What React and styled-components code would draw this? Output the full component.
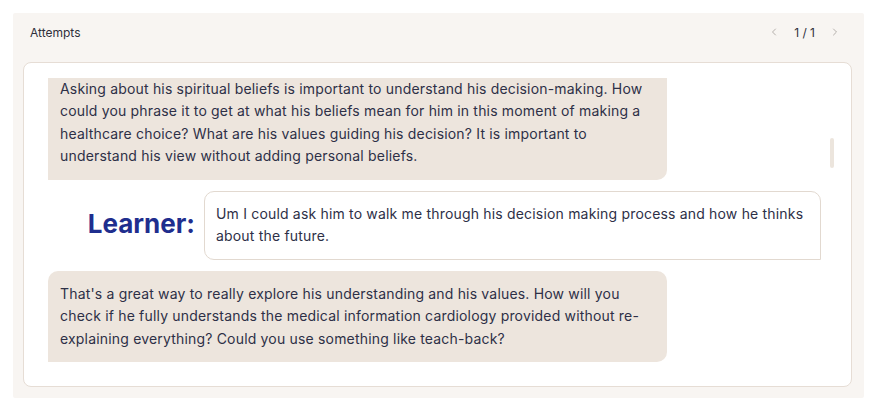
import styled, { createGlobalStyle } from 'styled-components';
import { ChevronLeft, ChevronRight } from 'lucide-react';

const GlobalStyle = createGlobalStyle`
  html, body {
    margin: 0;
    padding: 0;
    background: #ffffff;
  }
  body {
    font-family: Inter, "Noto Sans", sans-serif;
    color: #2e3047;
  }
`;

const Page = styled.div`
  padding: 13px 14px 12px 13px;
`;

const Panel = styled.section`
  background: #f8f5f2;
  border-radius: 2px;
  padding: 0 12px 11px 10px;
  height: 385px;
  box-sizing: border-box;
  display: flex;
  flex-direction: column;
`;

const Header = styled.div`
  height: 38px;
  margin-bottom: 11px;
  display: flex;
  align-items: center;
  justify-content: space-between;
  padding: 0 11px 0 7px;
`;

const HeaderTitle = styled.span`
  font-size: 12px;
  color: #2f2f3a;
`;

const Pager = styled.div`
  display: flex;
  align-items: center;
  gap: 14px;
  font-size: 12px;
  color: #2f2f3a;

  svg {
    color: #a29d98;
  }
`;

const Card = styled.div`
  position: relative;
  flex: 1;
  background: #ffffff;
  border: 1px solid #e6ddd5;
  border-radius: 8px;
  padding: 15px 0 15px;
  min-height: 0;
  display: flex;
`;

const Viewport = styled.div`
  flex: 1;
  overflow: hidden;
  display: flex;
  flex-direction: column;
  justify-content: flex-end;
  gap: 11px;
  padding: 0 30px 9px 24px;
`;

const Thumb = styled.div`
  position: absolute;
  top: 75px;
  right: 17px;
  width: 4px;
  height: 30px;
  border-radius: 2px;
  background: #ece5dd;
`;

const Bubble = styled.div`
  flex-shrink: 0;
  box-sizing: border-box;
  font-size: 14px;
  line-height: 22.5px;
  letter-spacing: 0.18px;
  background: ${(p) => (p.$learner ? '#ffffff' : '#ede5dd')};
  border: ${(p) => (p.$learner ? '1px solid #e2d9d0' : 'none')};
  border-radius: ${(p) => (p.$learner ? '10px 10px 0 10px' : '10px 10px 10px 0')};
  padding: ${(p) => (p.$learner ? '11px 10px 11px 11px' : '12px')};
  width: ${(p) => (p.$learner ? '617px' : '619px')};
`;

const LearnerRow = styled.div`
  flex-shrink: 0;
  display: flex;
  align-items: center;
  justify-content: flex-end;
  gap: 9px;
`;

const LearnerLabel = styled.span`
  font-size: 26px;
  font-weight: 700;
  color: #1f2e8e;
  padding-bottom: 4px;
`;

const messages = [
  {
    from: 'coach',
    text: 'Asking about his spiritual beliefs is important to understand his decision-making. How could you phrase it to get at what his beliefs mean for him in this moment of making a healthcare choice? What are his values guiding his decision? It is important to understand his view without adding personal beliefs.',
  },
  {
    from: 'learner',
    text: 'Um I could ask him to walk me through his decision making process and how he thinks about the future.',
  },
  {
    from: 'coach',
    text: "That's a great way to really explore his understanding and his values. How will you check if he fully understands the medical information cardiology provided without re-explaining everything? Could you use something like teach-back?",
  },
];

export default function App() {
  return (
    <>
      <GlobalStyle />
      <Page>
        <Panel>
          <Header>
            <HeaderTitle>Attempts</HeaderTitle>
            <Pager>
              <ChevronLeft size={12} strokeWidth={1.6} />
              <span>1 / 1</span>
              <ChevronRight size={12} strokeWidth={1.6} />
            </Pager>
          </Header>
          <Card>
            <Viewport>
              {messages.map((m, i) =>
                m.from === 'learner' ? (
                  <LearnerRow key={i}>
                    <LearnerLabel>Learner:</LearnerLabel>
                    <Bubble $learner>{m.text}</Bubble>
                  </LearnerRow>
                ) : (
                  <Bubble key={i}>{m.text}</Bubble>
                )
              )}
            </Viewport>
            <Thumb />
          </Card>
        </Panel>
      </Page>
    </>
  );
}
